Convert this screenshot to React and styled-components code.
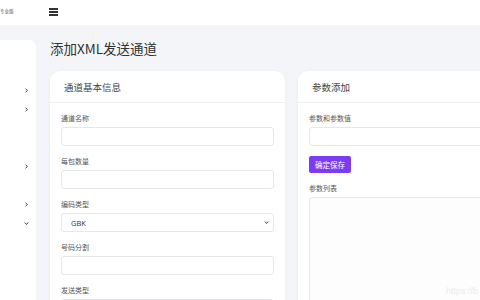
import React from "react";
import styled, { createGlobalStyle } from "styled-components";

const GlobalStyle = createGlobalStyle`
  html, body {
    margin: 0;
    padding: 0;
    width: 480px;
    height: 300px;
    overflow: hidden;
    background: #f4f5f8;
    font-family: "Noto Sans CJK SC", "Noto Sans", sans-serif;
    color: #333;
  }
  * { box-sizing: border-box; }
`;

const sideItems = [null, null, "right", "right", null, null, "right", null, "right", "down"];

const basicFields = [
  { label: "通道名称" },
  { label: "每包数量" },
  { label: "编码类型", select: "GBK" },
  { label: "号码分割" },
  { label: "发送类型" },
];

const Chevron = ({ dir }) => (
  <svg width="5" height="5" viewBox="0 0 10 10">
    {dir === "down" ? (
      <polyline points="1.5,3 5,7 8.5,3" fill="none" stroke="#444" strokeWidth="2" />
    ) : (
      <polyline points="3,1.5 7,5 3,8.5" fill="none" stroke="#444" strokeWidth="2" />
    )}
  </svg>
);

const App = () => {
  return (
    <Page>
      <GlobalStyle />
      <Header>
        <Brand>专业版</Brand>
        <Burger>
          <span />
          <span />
          <span />
        </Burger>
      </Header>
      <Body>
        <Sidebar>
          {sideItems.map((dir, i) => (
            <SideItem key={i}>{dir && <Chevron dir={dir} />}</SideItem>
          ))}
        </Sidebar>
        <Main>
          <Title>添加XML发送通道</Title>
          <CardRow>
            <Card>
              <CardHeader>通道基本信息</CardHeader>
              <CardBody>
                {basicFields.map(f => (
                  <Field key={f.label}>
                    <Label>{f.label}</Label>
                    {f.select ? (
                      <FakeSelect>
                        <span>{f.select}</span>
                        <Chevron dir="down" />
                      </FakeSelect>
                    ) : (
                      <Input />
                    )}
                  </Field>
                ))}
              </CardBody>
            </Card>
            <Card>
              <CardHeader>参数添加</CardHeader>
              <CardBody>
                <Field>
                  <Label>参数和参数值</Label>
                  <Input />
                </Field>
                <SaveButton>确定保存</SaveButton>
                <Label>参数列表</Label>
                <TextArea />
              </CardBody>
            </Card>
          </CardRow>
        </Main>
      </Body>
      <Watermark>https://b</Watermark>
    </Page>
  );
};

export default App;

const Page = styled.div`
  position: relative;
  width: 480px;
  height: 300px;
  overflow: hidden;
  display: flex;
  flex-direction: column;
`;

const Header = styled.div`
  display: flex;
  align-items: center;
  height: 25px;
  flex-shrink: 0;
  background: #fff;
`;

const Brand = styled.div`
  width: 49px;
  font-size: 4.5px;
  color: #555;
  padding-bottom: 4px;
`;

const Burger = styled.div`
  display: flex;
  flex-direction: column;
  justify-content: space-between;
  width: 9px;
  height: 8px;
  margin-top: -1px;

  span {
    display: block;
    height: 1.6px;
    background: #333;
  }
`;

const Body = styled.div`
  flex: 1;
  display: flex;
  min-height: 0;
`;

const Sidebar = styled.div`
  width: 36px;
  flex-shrink: 0;
  margin-top: 15px;
  background: #fff;
  border-top-right-radius: 7px;
  padding-top: 3px;
`;

const SideItem = styled.div`
  height: 19px;
  display: flex;
  align-items: center;
  justify-content: flex-end;
  padding-right: 7px;
`;

const Main = styled.div`
  flex: 1;
  min-width: 0;
  padding: 13px 0 0 14px;
`;

const Title = styled.h1`
  margin: 0 0 13px;
  font-size: 13.5px;
  line-height: 20px;
  font-weight: 400;
  color: #333;
`;

const CardRow = styled.div`
  display: flex;
  gap: 13px;
`;

const Card = styled.div`
  width: 235px;
  flex-shrink: 0;
  background: #fff;
  border-radius: 10px;
  box-shadow: 0 1px 4px rgba(0, 0, 0, 0.04);
  height: 260px;
`;

const CardHeader = styled.div`
  height: 32px;
  display: flex;
  align-items: center;
  padding: 0 14px;
  font-size: 9.5px;
  color: #444;
  border-bottom: 1px solid #eef0f2;
`;

const CardBody = styled.div`
  padding: 10px 11px 0;
`;

const Field = styled.div`
  margin-bottom: 10px;
`;

const Label = styled.div`
  font-size: 7px;
  line-height: 10px;
  color: #555;
  margin-bottom: 4px;
`;

const Input = styled.div`
  height: 19px;
  border: 1px solid #e5e7ea;
  border-radius: 3px;
  background: #fff;
`;

const FakeSelect = styled(Input)`
  display: flex;
  align-items: center;
  justify-content: space-between;
  padding: 0 4px 0 9px;
  font-family: "Open Sans", "Noto Sans", sans-serif;
  font-size: 7.5px;
  color: #333;
`;

const SaveButton = styled.button`
  display: block;
  width: 42px;
  height: 17px;
  margin: 1px 0 10px;
  padding: 0;
  border: none;
  border-radius: 2px;
  background: #7b3cf2;
  color: #fff;
  font-family: "Noto Sans CJK SC", sans-serif;
  font-size: 7.5px;
`;

const TextArea = styled.div`
  height: 120px;
  border: 1px solid #e5e7ea;
  border-radius: 3px;
  background: #fdfdfd;
`;

const Watermark = styled.div`
  position: absolute;
  right: 2px;
  bottom: 4px;
  font-family: "Liberation Sans", sans-serif;
  font-size: 9px;
  color: #ebebeb;
`;
